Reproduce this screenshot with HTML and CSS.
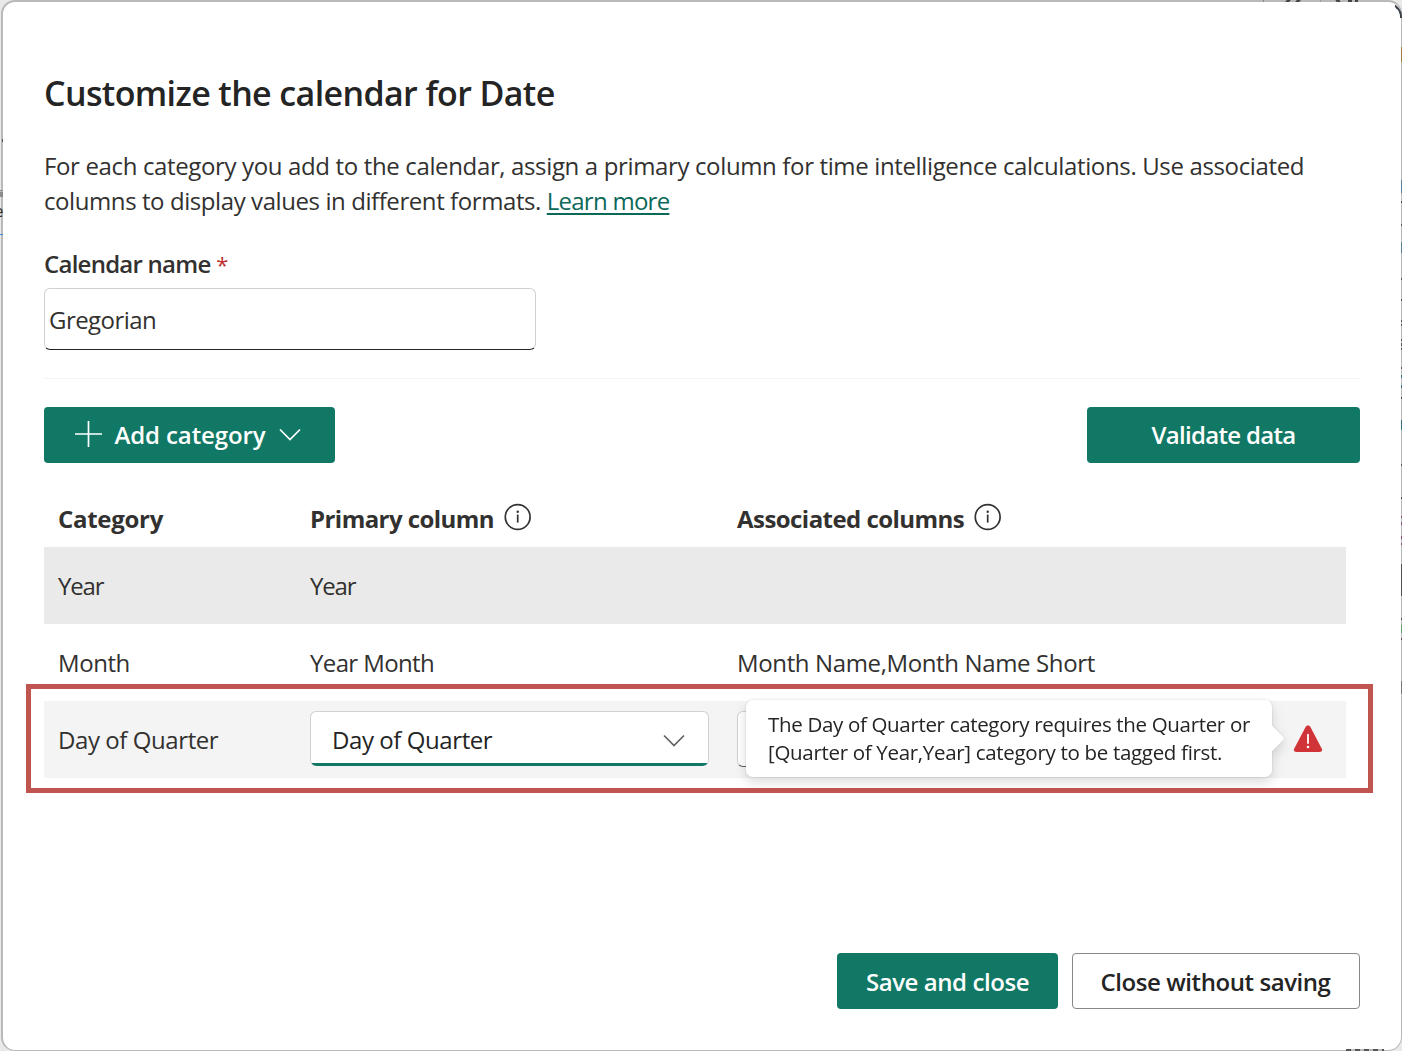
FILE: index.html
```html
<!DOCTYPE html>
<html lang="en">
<head>
<meta charset="utf-8">
<title>Customize the calendar for Date</title>
<link rel="stylesheet" href="styles.css">
</head>
<body>
<div class="backdrop" aria-hidden="true">
  <i class="bit bit-rule"></i><i class="bit bit-line"></i><i class="bit bit-dot"></i><span class="bit bit-text">e</span>
  <i class="bit bit-sep"></i><i class="bit bit-sep2"></i><i class="bit bit-slash"></i><i class="bit bit-slash2"></i><i class="bit bit-glyph"></i><i class="bit bit-glyph2"></i>
  <i class="bit bit-corner"></i><i class="bit bit-right"></i><i class="bit bit-foot"></i>
</div>
<main class="dialog">
  <h1 class="title">Customize the calendar for Date</h1>
  <p class="intro"><span class="intro-first">For each category you add to the calendar, assign a primary column for time intelligence calculations. Use associated</span><br><span class="intro-second">columns to display values in different formats.</span> <a class="link" href="#">Learn more</a></p>

  <label class="label" for="name"><span class="label-text">Calendar name</span> <span class="required">*</span></label>
  <input class="name-input" id="name" value="Gregorian">

  <hr class="divider">

  <div class="toolbar">
    <button class="btn primary add">
      <svg class="plus" width="28" height="28" viewBox="0 0 28 28"><path d="M14.5 0v26M1 13h27" /></svg>
      <span class="add-text">Add category</span>
      <svg class="chevron" width="22" height="14" viewBox="0 0 22 14"><path d="M1 1.5 11 11.5 21 1.5" /></svg>
    </button>
    <button class="btn primary validate">Validate data</button>
  </div>

  <section class="table">
    <div class="row head">
      <span class="cell head-category">Category</span>
      <span class="cell head-cell">Primary column
        <svg class="info" width="28" height="28" viewBox="0 0 28 28"><circle cx="13.7" cy="14" r="12.4"/><path d="M13.7 11.6v8"/><circle class="info-dot" cx="13.7" cy="8.7" r="1.2"/></svg>
      </span>
      <span class="cell head-cell">Associated columns
        <svg class="info" width="28" height="28" viewBox="0 0 28 28"><circle cx="13.7" cy="14" r="12.4"/><path d="M13.7 11.6v8"/><circle class="info-dot" cx="13.7" cy="8.7" r="1.2"/></svg>
      </span>
    </div>
    <div class="row selected"><span class="cell">Year</span><span class="cell">Year</span><span class="cell"></span></div>
    <div class="row"><span class="cell">Month</span><span class="cell year-month">Year Month</span><span class="cell month-names">Month Name,Month Name Short</span></div>
    <div class="row editing">
      <span class="cell">Day of Quarter</span>
      <div class="select active"><span>Day of Quarter</span>
        <svg class="chevron" width="22" height="14" viewBox="0 0 22 14"><path d="M1 1.5 11 11.5 21 1.5" /></svg>
      </div>
      <div class="select assoc"></div>
      <svg class="warning" width="30" height="28" viewBox="0 0 30 28"><path class="warning-shape" d="M12.7 1.8Q15-1.4 17.3 1.8L28.7 23.5Q30 27 26.6 27H3.4Q0 27 1.3 23.5Z"/><path class="warning-mark" d="M15 9.7v8.4"/><circle class="warning-dot" cx="15" cy="22" r="1.3"/></svg>
      <div class="tooltip" role="tooltip"><span class="tip-first">The Day of Quarter category requires the Quarter or</span><br><span class="tip-second">[Quarter of Year,Year] category to be tagged first.</span></div>
      <div class="highlight"></div>
    </div>
  </section>

  <footer class="footer">
    <button class="btn primary save">Save and close</button>
    <button class="btn secondary">Close without saving</button>
  </footer>
</main>
</body>
</html>
```
FILE: styles.css
```css
* { box-sizing: border-box; }

body {
  margin: 0;
  height: 1051px;
  overflow: hidden;
  display: flex;
  padding: 0 0 0 1px;
  background: #e9e9e9;
  color: #323130;
  font: 24px/35px "Open Sans", "Noto Sans", sans-serif;
  letter-spacing: -0.42px;
}

.dialog {
  flex: 1;
  display: flex;
  flex-direction: column;
  padding: 69px 41px 41px;
  background: #fff;
  border: solid #b9b9b9;
  border-width: 2px 1px 1px 2px;
  border-radius: 14px;
}

/* slivers of the page behind the dialog */
.bit { position: absolute; display: block; z-index: 1; }
.bit-rule { left: 0; top: 190px; width: 3px; height: 7px; background: linear-gradient(#8c8c8c 1px, #b9b9b9 1px 2px, #8c8c8c 2px); }
.bit-line { left: 0; top: 234px; width: 3px; height: 1px; background: #3b8fe0; }
.bit-dot { left: 2px; top: 139px; width: 1px; height: 3px; background: #555; }
.bit-text { left: 0; top: 200px; width: 3px; height: 22px; overflow: hidden; font-size: 17px; line-height: 22px; text-indent: -6px; }
.bit-sep { left: 1263px; top: 0; width: 1px; height: 2px; background: #888; }
.bit-sep2 { left: 1320px; top: 0; width: 1px; height: 2px; background: #999; }
.bit-slash { left: 1286px; top: 0; width: 4px; height: 2px; background: #444; transform: skewX(-40deg); }
.bit-slash2 { left: 1296px; top: 0; width: 4px; height: 2px; background: #444; transform: skewX(-40deg); }
.bit-glyph { left: 1336px; top: 0; width: 4px; height: 2px; background: #444; transform: skewX(30deg); }
.bit-glyph2 { left: 1348px; top: 0; width: 10px; height: 2px; background: linear-gradient(90deg, #444 4px, #b9b9b9 4px 7px, #444 7px); }
.bit-corner { left: 1387px; top: 3px; width: 15px; height: 15px; border: solid #3a4048; border-width: 2px 2px 0 0; border-radius: 0 14px 0 0; clip-path: inset(0 0 0 8px); }
.bit-right {
  left: 1401px; top: 0; width: 1px; height: 1051px;
  background: linear-gradient(
    transparent 47px, #a57c45 47px 62px,
    transparent 62px 180px, #5580a0 180px 193px,
    transparent 193px 201px, #555 201px 203px,
    transparent 203px 224px, #555 224px 226px,
    transparent 226px 242px, #5580a0 242px 253px,
    transparent 253px 278px, #555 278px 280px,
    transparent 280px 299px, #555 299px 301px,
    transparent 301px 320px, #555 320px 322px,
    transparent 322px 324px, #555 324px 326px,
    transparent 326px 339px, #555 339px 341px,
    transparent 341px 343px, #555 343px 346px,
    transparent 346px 348px, #555 348px 350px,
    transparent 350px 367px, #555 367px 369px,
    transparent 369px 375px, #357088 375px 378px,
    transparent 378px 385px, #357088 385px 388px,
    transparent 388px 397px, #555 397px 399px,
    transparent 399px 420px, #357088 420px 430px,
    transparent 430px 464px, #555 464px 466px,
    transparent 466px 497px, #555 497px 499px,
    transparent 499px 516px, #905080 516px 518px,
    transparent 518px 522px, #905080 522px 525px,
    transparent 525px 536px, #905080 536px 539px,
    transparent 539px 543px, #905080 543px 545px,
    transparent 545px 564px, #505050 564px 596px,
    transparent 596px 618px, #555 618px 620px,
    transparent 620px 625px, #60a060 625px 633px,
    transparent 633px 638px, #555 638px 640px,
    transparent 640px 681px, #777 681px 694px, transparent 694px);
}
.bit-foot { left: 1346px; top: 1049px; width: 38px; height: 2px; background: repeating-linear-gradient(90deg, #555 0 5px, #b9b9b9 5px 9px); }

.title {
  margin: 0 0 33px;
  color: #242424;
  font-size: 34px;
  line-height: 44px;
  font-weight: 600;
  letter-spacing: -0.62px;
}

.intro { margin: 0 0 28px; white-space: nowrap; }
.intro-first { letter-spacing: -0.358px; }
.intro-second { letter-spacing: -0.42px; }
.link {
  color: #0c695a;
  letter-spacing: -0.74px;
  text-decoration-thickness: 1.5px;
  text-underline-offset: 3px;
}

.label { margin-bottom: 6px; font-weight: 600; }
.label-text { letter-spacing: -0.75px; }
.required { color: #bc2f32; font-weight: 400; font-size: 22px; }

.name-input {
  width: 492px;
  height: 62px;
  padding: 1px 4px 0 4px;
  border: 1px solid #d1d1d1;
  border-bottom-color: #242424;
  border-radius: 6px;
  background: #fff;
  color: inherit;
  font: inherit;
  letter-spacing: -0.55px;
}

.divider { width: 100%; height: 1px; margin: 28px 0; border: 0; background: #f3f3f3; }

.toolbar, .footer { display: flex; justify-content: space-between; }

.btn {
  height: 56px;
  display: flex;
  align-items: center;
  justify-content: center;
  padding: 0 0 1px;
  border: 0;
  border-radius: 4px;
  font: 600 24px/35px "Open Sans", "Noto Sans", sans-serif;
  letter-spacing: -0.43px;
  white-space: nowrap;
}
.primary { background: #117865; color: #fff; }
.add { width: 291px; padding-right: 4px; gap: 12px; }
.add-text { letter-spacing: -0.1px; }
.add .chevron { margin: 1px 0 0 1px; }
.validate { width: 273px; letter-spacing: -0.69px; }
.footer .btn { padding: 1px 0 0; }
.save { width: 221px; }
.footer .secondary { width: 288px; padding-right: 1px; background: #fff; color: #242424; border: 1px solid #888; }

.plus, .chevron { fill: none; stroke: currentColor; stroke-width: 1.7; }

.table { width: 1302px; margin-top: 38px; }
.row {
  display: grid;
  grid-template-columns: 252px 427px 1fr;
  align-items: center;
  height: 77px;
  padding-left: 14px;
  white-space: nowrap;
}
.head { height: 46px; padding-bottom: 11px; font-weight: 700; letter-spacing: -0.55px; }
.head-category { letter-spacing: -0.29px; }
.head-cell { display: flex; align-items: center; gap: 10px; }
.selected { background: #eaeaea; letter-spacing: -1.2px; }
.year-month { letter-spacing: -0.62px; }
.month-names { letter-spacing: -0.37px; }
.editing {
  position: relative;
  grid-template-columns: 252px 427px 1fr 53px;
  background: #f4f4f4;
}

.info { margin-top: -3px; fill: none; stroke: #323130; stroke-width: 1.7; }
.info-dot { fill: #323130; stroke: none; }

.select {
  width: 399px;
  height: 56px;
  display: flex;
  align-items: center;
  justify-content: space-between;
  margin-bottom: 2px;
  padding: 2px 23px 0 21px;
  border: 1px solid #d1d1d1;
  border-radius: 6px;
  background: #fff;
  color: #242424;
}
.select .chevron { margin-top: 3px; color: #616161; }
.active {
  height: 55px;
  margin-bottom: 3px;
  border-bottom: 0;
  background: linear-gradient(#117865, #117865) bottom / 100% 3px no-repeat #fff;
}
.assoc { border-bottom-color: #616161; }

.warning { margin: 0 0 2px -0.5px; }
.warning-shape { fill: #d13438; }
.warning-mark { stroke: #fff; stroke-width: 1.8; stroke-linecap: round; }
.warning-dot { fill: #fff; }

.tooltip {
  position: absolute;
  left: 702px;
  top: -1px;
  width: 526px;
  height: 77px;
  padding: 10px 22px;
  border-radius: 7px;
  background: #fff;
  color: #242424;
  font-size: 20.5px;
  line-height: 28px;
  filter: drop-shadow(0 0 1px rgba(0, 0, 0, .12)) drop-shadow(0 5px 6px rgba(0, 0, 0, .14));
}
.tooltip::after {
  content: "";
  position: absolute;
  left: 516px;
  top: 29px;
  width: 19px;
  height: 19px;
  border-radius: 0 3px 0 0;
  background: #fff;
  transform: rotate(45deg);
}
.tip-first { letter-spacing: -0.33px; }
.tip-second { letter-spacing: -0.31px; }

.highlight {
  position: absolute;
  left: -18px;
  top: -17px;
  width: 1347px;
  height: 109px;
  border: 5px solid #c0544f;
}

.footer { justify-content: flex-end; gap: 14px; margin-top: auto; }
```
